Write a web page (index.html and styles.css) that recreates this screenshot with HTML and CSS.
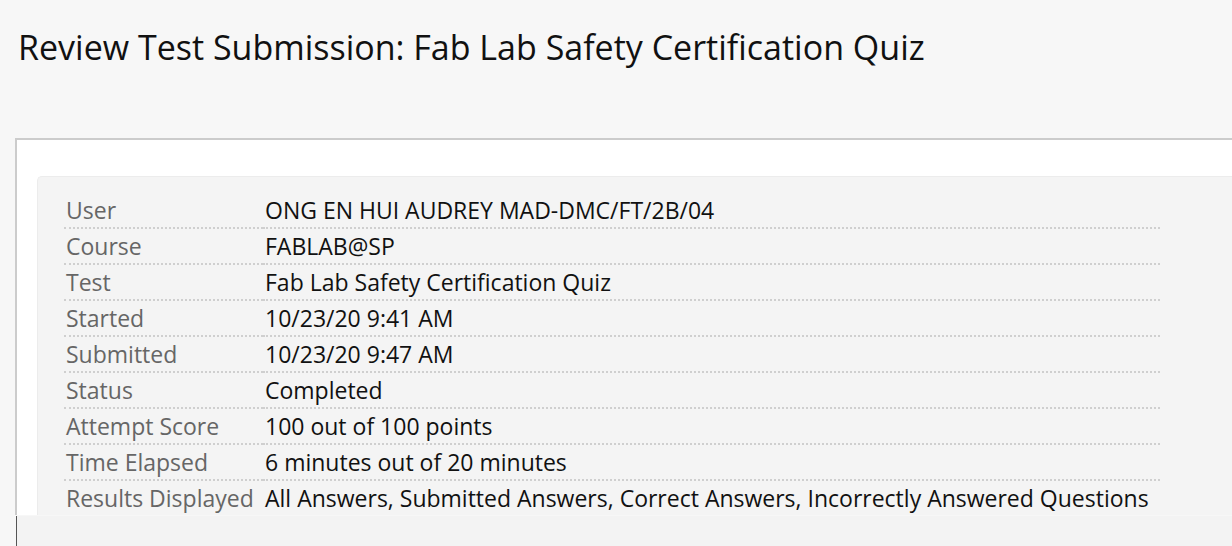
FILE: index.html
```html
<!DOCTYPE html>
<html>
<head>
<meta charset="utf-8">
<link rel="stylesheet" href="styles.css">
</head>
<body>
<h1 class="page-title">Review Test Submission: Fab Lab Safety Certification Quiz</h1>
<div class="content-box">
  <div class="details">
    <table class="details-table">
      <tr><th>User</th><td>ONG EN HUI AUDREY MAD-DMC/FT/2B/04</td></tr>
      <tr><th>Course</th><td>FABLAB@SP</td></tr>
      <tr><th>Test</th><td>Fab Lab Safety Certification Quiz</td></tr>
      <tr><th>Started</th><td>10/23/20 9:41 AM</td></tr>
      <tr><th>Submitted</th><td>10/23/20 9:47 AM</td></tr>
      <tr><th>Status</th><td>Completed</td></tr>
      <tr><th>Attempt Score</th><td>100 out of 100 points</td></tr>
      <tr><th>Time Elapsed</th><td>6 minutes out of 20 minutes</td></tr>
      <tr class="last"><th>Results Displayed</th><td>All Answers, Submitted Answers, Correct Answers, Incorrectly Answered Questions</td></tr>
    </table>
  </div>
</div>
<div class="bottom-bar"></div>
</body>
</html>
```
FILE: styles.css
```css
html, body {
  margin: 0;
  padding: 0;
  background: #f7f7f7;
  overflow: hidden;
  height: 546px;
  font-family: "Open Sans", "Liberation Sans", sans-serif;
}

.page-title {
  margin: 0;
  padding: 24px 0 0 18px;
  font-size: 34px;
  line-height: 46px;
  font-weight: 400;
  color: #111;
  white-space: nowrap;
}

.content-box {
  margin: 68px 0 0 15px;
  background: #fff;
  border-top: 2px solid #cccccc;
  border-left: 2px solid #cccccc;
  padding: 36px 0 0 20px;
}

.details {
  background: #f4f4f4;
  border: 1px solid #ececec;
  border-right: none;
  border-bottom: none;
  border-radius: 5px 0 0 0;
  padding: 16px 0 0 26px;
}

.details-table {
  border-collapse: collapse;
  width: 1096px;
  font-size: 23px;
  line-height: 34px;
}

.details-table th,
.details-table td {
  padding: 0 0 0 2px;
  text-align: left;
  font-weight: 400;
  white-space: nowrap;
  border-bottom: 2px dotted #cfcfcf;
  vertical-align: top;
}

.details-table th {
  width: 197px;
  color: #666;
}

.details-table td {
  color: #111;
}

.details-table .last th,
.details-table .last td {
  border-bottom: none;
}

.bottom-bar {
  position: fixed;
  left: 16px;
  right: 0;
  top: 516px;
  bottom: 0;
  background: #f3f3f3;
  border-left: 1px solid #555;
}
```
